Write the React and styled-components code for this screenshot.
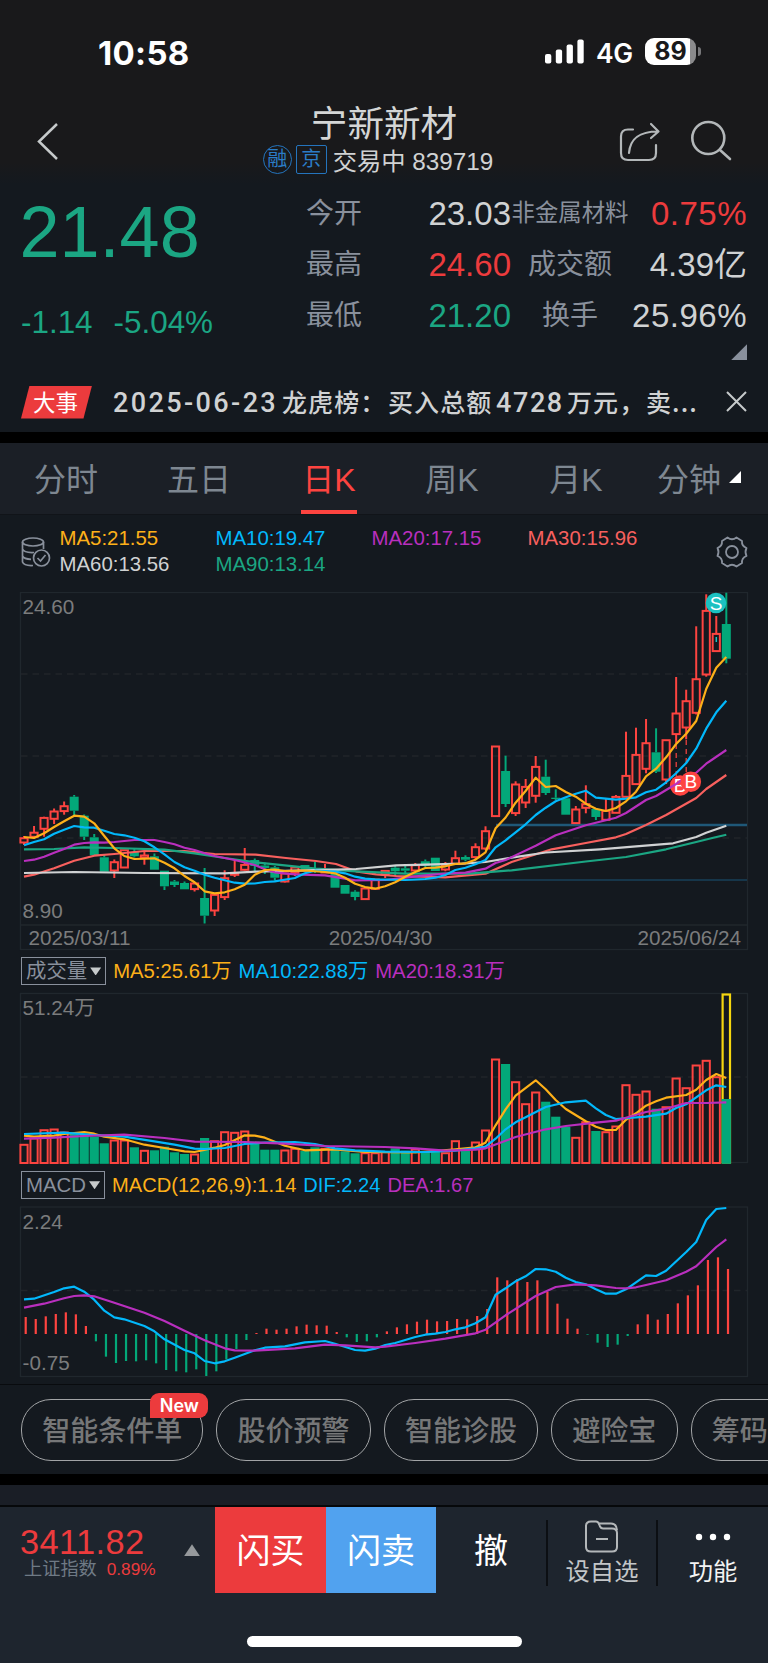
import React from 'react';
import styled, { createGlobalStyle } from 'styled-components';

const RED = '#ec3b3d';
const CANDLE_RED = '#fd4440';
const GREEN = '#1ba683';
const CANDLE_GREEN = '#03a879';
const YELLOW = '#fdb019';
const BLUE = '#02b8fb';
const PURPLE = '#b92fbe';
const PINK = '#f8605e';
const WHITE = '#d0d2d3';

const GlobalStyle = createGlobalStyle`
  * {
    box-sizing: border-box;
  }
  body {
    margin: 0;
    background-color: #14191f;
    font-family: "Liberation Sans", "Noto Sans CJK SC", sans-serif;
  }
`;

const Page = styled.div`
  width: 768px;
  height: 1663px;
  display: flex;
  flex-direction: column;
  overflow: hidden;
  color: ${WHITE};
  background-color: #14191f;
  white-space: nowrap;
`;

const StatusBar = styled.div`
  height: 98px;
  padding: 6px 67px 0 98px;
  display: flex;
  align-items: center;
  justify-content: space-between;
  background-color: #19191b;
  color: white;
  font-family: Inter, sans-serif;
`;

const Clock = styled.div`
  padding-top: 2px;
  font-size: 33px;
  font-weight: 700;
  letter-spacing: 0.3px;
`;

const StatusIcons = styled.div`
  display: flex;
  align-items: center;
`;

const Network = styled.div`
  margin: 2px 12px 0 12px;
  font-size: 26.5px;
  font-weight: 600;
  letter-spacing: -0.2px;
`;

const Battery = styled.div`
  width: 51px;
  height: 27px;
  border-radius: 9px;
  background: linear-gradient(to right, white 45px, #8b8b8d 45px);
  color: #19191b;
  font-size: 25px;
  font-weight: 700;
  line-height: 27px;
  text-align: center;
`;

const BatteryNub = styled.div`
  width: 3px;
  height: 9px;
  margin-left: 2px;
  border-radius: 0 4px 4px 0;
  background-color: #77777a;
`;

const Header = styled.div`
  height: 86px;
  padding: 0 36px 0 34px;
  display: grid;
  grid-template-columns: 160px 1fr 158px;
  background: linear-gradient(#19191b 75%, #14191f);
`;

const HeaderLeft = styled.div`
  padding-top: 24px;
`;

const HeaderRight = styled.div`
  display: flex;
  justify-content: flex-end;
  gap: 28px;
  padding-top: 22px;
`;

const HeaderCenter = styled.div`
  display: flex;
  flex-direction: column;
  align-items: center;
`;

const Title = styled.div`
  height: 46px;
  font-size: 36.6px;
  line-height: 53px;
  color: #d4d6d6;
`;

const Subtitle = styled.div`
  height: 31px;
  margin-left: -12px;
  display: flex;
  align-items: center;
  font-size: 24.3px;
`;

const Badge = styled.div`
  width: ${({ $round }) => ($round ? 29 : 31)}px;
  height: 29px;
  margin-right: ${({ $round }) => ($round ? 4 : 6)}px;
  border: 1.5px solid #2474bd;
  border-radius: ${({ $round }) => ($round ? '50%' : '2px')};
  color: #2b7dc8;
  font-size: 20px;
  line-height: 27px;
  display: flex;
  justify-content: center;
`;

const Quote = styled.div`
  height: 188px;
  padding: 1px 21px 0;
  display: flex;
`;

const PriceColumn = styled.div`
  width: 285px;
  color: ${GREEN};
`;

const Price = styled.div`
  font-size: 72px;
  line-height: 94px;
  margin-left: -1.5px;
`;

const Change = styled.div`
  display: flex;
  gap: 21px;
  font-size: 31.4px;
  line-height: 88px;
`;

const Stats = styled.div`
  padding-top: 3.5px;
`;

const StatsGrid = styled.div`
  display: grid;
  grid-template-columns: 58px 147px 118px 118px;
  grid-auto-rows: 51px;
  line-height: 51px;
`;

const StatLabel = styled.div`
  font-size: ${({ $small }) => ($small ? 23.4 : 28)}px;
  text-align: ${({ $center }) => ($center ? 'center' : 'left')};
  color: #89909c;
`;

const StatValue = styled.div`
  font-size: 33px;
  text-align: right;
  letter-spacing: ${({ $spacing }) => $spacing || 0}px;
  color: ${({ $color }) => $color || WHITE};
`;

const Corner = styled.div`
  width: ${({ $size }) => $size}px;
  height: ${({ $size }) => $size}px;
  background-color: ${({ $color }) => $color};
  clip-path: polygon(100% 0, 100% 100%, 0 100%);
`;

const StatsMore = styled.div`
  display: flex;
  justify-content: flex-end;
  padding-top: 3px;
`;

const News = styled.div`
  height: 61px;
  padding: 0 21px;
  display: flex;
  align-items: center;
`;

const NewsTag = styled.div`
  width: 71px;
  height: 33px;
  margin-right: 21px;
  background-color: ${RED};
  clip-path: polygon(12% 0, 100% 0, 88% 100%, 0 100%);
  color: white;
  font-family: "Noto Sans CJK SC", sans-serif;
  font-size: 22.5px;
  line-height: 31px;
  text-align: center;
  padding-right: 2px;
`;

const NewsText = styled.div`
  flex: 1;
  height: 34px;
  display: flex;
  font-family: "Noto Sans CJK SC", sans-serif;
  font-size: 25px;
  line-height: 32px;
  letter-spacing: 1.1px;
  font-weight: 500;
`;

const NewsNumber = styled.span`
  flex: none;
  width: ${({ $width }) => $width}px;
  font-family: Roboto, sans-serif;
  font-size: 27px;
  font-weight: 500;
  line-height: 36px;
  letter-spacing: ${({ $spacing }) => $spacing}px;
`;

const NewsPart = styled.span`
  flex: none;
  width: ${({ $width }) => $width}px;
`;

const Band = styled.div`
  height: ${({ $height }) => $height}px;
  background-color: black;
`;

const Tabs = styled.div`
  height: 72px;
  padding: 0 27px 0 35px;
  display: grid;
  grid-template-columns: 62px 204px 56px 190px 58px 1fr;
  background-color: #1b1f26;
  border-bottom: 1px solid #111419;
`;

const Tab = styled.div`
  height: 71px;
  display: flex;
  align-items: center;
  justify-content: ${({ $menu }) => ($menu ? 'flex-end' : 'center')};
  gap: 8px;
  color: ${({ $active }) => ($active ? CANDLE_RED : '#7e8791')};
  font-size: 32px;
  line-height: 71px;
  border-bottom: 4px solid ${({ $active }) => ($active ? CANDLE_RED : 'transparent')};
`;

const TabLabel = styled.span`
  padding-top: 7px;
`;

const Averages = styled.div`
  height: 77px;
  padding: 10px 20px 0 21px;
  display: flex;
`;

const AverageGrid = styled.div`
  flex: 1;
  margin-left: 8.5px;
  display: grid;
  grid-template-columns: repeat(4, 156px);
  grid-auto-rows: 26px;
  font-size: 20.4px;
  line-height: 26px;
`;

const Tint = styled.span`
  color: ${({ $color }) => $color};
`;

const IconSlot = styled.div`
  padding-top: 11px;
`;

const Chart = styled.svg`
  display: block;
  flex: none;
`;

const IndicatorRow = styled.div`
  height: 41px;
  padding: 6px 21px 0;
  display: flex;
  gap: 7px;
  font-size: ${({ $size }) => $size}px;
  line-height: 28px;
`;

const Picker = styled.div`
  height: 28px;
  padding: 0 4px;
  display: flex;
  align-items: center;
  gap: 3px;
  border: 1.5px solid #89909c;
  color: #89909c;
  font-size: 20.4px;
  line-height: 26px;
`;

const Arrow = styled.div`
  width: ${({ $width }) => $width}px;
  height: ${({ $height }) => $height}px;
  background-color: ${({ $color }) => $color};
  clip-path: ${({ $up }) => ($up ? 'polygon(50% 0, 100% 100%, 0 100%)' : 'polygon(0 0, 100% 0, 50% 100%)')};
`;

const Shortcuts = styled.div`
  height: 90px;
  padding: 14px 0 0 21px;
  display: flex;
  gap: 13px;
  border-top: 1px solid #090b0e;
`;

const Pill = styled.div`
  position: relative;
  flex: none;
  height: 62px;
  padding: 0 20.2px;
  border: 1.5px solid #a2a4a6;
  border-radius: 30px;
  color: #767778;
  font-family: "Noto Sans CJK SC", sans-serif;
  font-size: 28px;
  font-weight: 500;
  line-height: 58px;
`;

const NewBadge = styled.div`
  position: absolute;
  top: -7px;
  right: -6px;
  width: 58px;
  height: 25px;
  border-radius: 9px 9px 9px 0;
  background-color: ${RED};
  color: white;
  font-family: Inter, sans-serif;
  font-size: 18px;
  font-weight: 600;
  line-height: 26px;
  text-align: center;
`;

const Spacer = styled.div`
  height: 22px;
  background-color: #1a1e26;
  border-bottom: 2px solid #06080a;
`;

const Footer = styled.div`
  height: 156px;
  background-color: #1e252e;
`;

const FooterBar = styled.div`
  height: 86px;
  display: flex;
`;

const IndexBox = styled.div`
  width: 215px;
  padding: 16px 15px 0 21px;
  display: flex;
  justify-content: space-between;
`;

const IndexValue = styled.div`
  height: 33px;
  font-size: 34.4px;
  line-height: 39px;
  letter-spacing: 0.4px;
  color: ${RED};
  margin-left: -1px;
`;

const IndexInfo = styled.div`
  display: flex;
  align-items: center;
  gap: 10px;
  padding-left: 3px;
  height: 26px;
  line-height: 26px;
  font-size: 18.2px;
  color: #6f7a85;
`;

const IndexPercent = styled.span`
  font-size: 17.2px;
  color: ${RED};
`;

const IndexArrow = styled.div`
  padding-top: 21px;
`;

const Trade = styled.div`
  width: ${({ $width }) => $width}px;
  background-color: ${({ $color }) => $color || 'transparent'};
  color: white;
  font-size: 34px;
  line-height: 89px;
  text-align: center;
`;

const Action = styled.div`
  width: ${({ $width }) => $width}px;
  height: 66px;
  margin-top: 13px;
  display: flex;
  flex-direction: column;
  align-items: center;
  border-left: 2px solid #0c0f13;
  color: ${({ $bright }) => ($bright ? '#f2f3f3' : '#c3c6c8')};
  font-size: 24.3px;
  line-height: 37px;
`;

const ActionIcon = styled.div`
  height: 33px;
`;

const HomeIndicator = styled.div`
  width: 275px;
  height: 11px;
  margin: 43px auto 0 247px;
  border-radius: 6px;
  background-color: white;
`;

// body top, body bottom, high, low, 1 = rising
const candles = [
  [838, 842.7, 836, 845, 1], [832.5, 837, 826, 837, 1], [817.7, 829, 816.7, 836.7, 1],
  [811.3, 819, 808.5, 824, 1], [806, 811.3, 801.5, 814.7, 1], [796.7, 810.7, 795, 815, 0],
  [815.7, 836.7, 814.5, 840, 0], [837.3, 855.3, 834, 855.3, 0], [857.3, 871.7, 855, 871.7, 0],
  [862, 870.7, 859.5, 878, 1], [850, 867.7, 850, 867.7, 1], [852, 856.3, 849, 857.5, 0],
  [855.3, 858, 851.5, 864.7, 1], [856.3, 869.7, 853.5, 869.7, 0], [870.7, 886.3, 870.7, 890, 0],
  [881.5, 885, 880, 887, 0], [883, 889.3, 881.5, 889.3, 0], [883.3, 889.3, 882.5, 891.5, 1],
  [898, 915.7, 868, 923.5, 0], [894.7, 910.7, 893, 916, 1], [878, 897.3, 870.3, 900, 1],
  [873.3, 875, 860.5, 877, 1], [864.7, 870, 848, 870.5, 1], [860, 866, 858.5, 871, 0],
  [865.5, 868, 862.7, 874, 0], [867.3, 877.7, 866, 880.7, 0], [873.3, 881.7, 873.3, 882.5, 1],
  [867.3, 873, 867.3, 876, 1], [865, 869.3, 865, 869.3, 0], [869, 872, 862, 873, 0],
  [871.3, 872.7, 864, 873, 1], [874, 887.7, 874, 887.7, 0], [885, 893.7, 885, 893.7, 0],
  [891.7, 897, 890.3, 900.3, 0], [888.3, 899.3, 887, 900, 1], [879.3, 889, 879.3, 889, 1],
  [870.7, 874.7, 870, 878, 1], [867.7, 871.3, 866, 875, 0], [868.3, 870.7, 866, 873.3, 0],
  [865, 870.7, 863, 871.3, 1], [861.3, 866, 859.5, 867, 0], [857.7, 871, 857.7, 871, 0],
  [864.7, 869.7, 862, 871.3, 1], [858, 864, 850.7, 864, 1], [857, 859.7, 855.3, 861.3, 0],
  [847, 857.3, 843.3, 860, 1], [831, 848.7, 826.3, 850, 1], [746.3, 816.3, 746.3, 816.3, 1],
  [771, 804, 755.7, 807, 0], [784.3, 813.3, 781.3, 816, 1], [786.7, 802.7, 779, 808, 1],
  [766.7, 796, 756, 802.7, 1], [776.7, 793, 759.7, 795, 0], [797.7, 799, 789.3, 800, 0],
  [798.3, 814.7, 798.3, 814.7, 0], [809.3, 823.3, 806, 823.3, 1], [804, 808, 785.3, 813.3, 1],
  [809, 817, 809, 820, 0], [810.7, 820, 798.3, 820, 1], [796.7, 813, 795, 813, 1],
  [775.7, 797, 731.7, 797, 1], [754.7, 784.3, 727.7, 784.3, 1], [743, 769, 719, 773.3, 1],
  [752.3, 771.7, 728.3, 773, 0], [740, 779.7, 740, 784, 1], [713.3, 734.3, 677, 743.3, 1],
  [701, 727.7, 689.7, 739.3, 1], [679, 713, 626.3, 714.5, 1], [610.7, 674.7, 594.3, 676.7, 1],
  [633.7, 651.3, 616, 651.3, 1], [624, 658.7, 592.7, 663.3, 0],
];

const volumes = [
  1144.3, 1138, 1129.7, 1129, 1132, 1134, 1133.5, 1136.7, 1143.3, 1140, 1140, 1147.3, 1150.3,
  1150.3, 1146.7, 1152.3, 1154, 1154, 1138, 1140.7, 1131.7, 1132.3, 1131, 1141.7, 1149.7, 1149.7,
  1150, 1148.3, 1151, 1147.3, 1148.3, 1149, 1151.3, 1153.3, 1152.7, 1152.7, 1151.7, 1148.3,
  1150.7, 1149, 1151, 1151.7, 1152.7, 1140.7, 1150.7, 1142, 1130, 1059, 1064, 1081.7, 1103.7,
  1092, 1101.7, 1116.7, 1126.7, 1137.3, 1121.7, 1131, 1131.7, 1126, 1084.7, 1094.3, 1091, 1108.7,
  1106.7, 1078, 1087.7, 1065, 1060.3, 1076.7, 1099,
];

const macd = [
  51, 45, 53, 60, 65, 59, 24, -22, -68, -87, -81, -82, -79, -88, -108, -112, -115, -106, -126,
  -112, -76, -45, -18, 3, 16, 13, 16, 23, 28, 26, 25, 6, -10, -24, -22, -10, 8, 20, 29, 37, 43,
  38, 39, 45, 44, 54, 75, 170, 161, 165, 156, 161, 127, 91, 46, 16, -2, -26, -39, -32, -6, 29, 59,
  43, 60, 92, 116, 146, 222, 230, 195,
];

// flat lists of index, y
const priceLines = [
  [PINK, [0, 876.7, 1, 874.7, 3, 868.3, 5, 860.7, 7, 855.7, 9, 854, 12, 851, 16, 851, 19, 854, 23.1, 854.7, 26.1, 858, 29.1, 861, 31.1, 864, 33.1, 871.3, 35.1, 874.3, 37.1, 876, 42, 877.3, 46, 873.7, 48.6, 862, 52.6, 849.3, 56, 843, 59, 837.3, 60, 834, 62, 825, 64, 815, 67, 798, 68, 789, 70, 775]],
  [GREEN, [0, 849.3, 3, 849, 6, 847.3, 9, 848, 14, 849.7, 17, 853.3, 20, 858, 23.1, 862.3, 29.1, 868.7, 33.1, 871.3, 38, 873.7, 44.4, 873.7, 48.6, 870.3, 56, 861.5, 60, 857, 64, 849.3, 67, 842, 68.7, 837.7, 70, 834.7]],
  [WHITE, [0, 873, 5, 872, 12, 873, 20, 873.3, 23.1, 871.7, 29, 870.2, 33.1, 869, 37.1, 865.3, 43.7, 863.7, 46, 862, 48.6, 857.7, 52, 852.5, 57.4, 849.3, 60.7, 846.7, 64.7, 843.3, 67, 837, 68, 832.7, 70, 825.7]],
  [PURPLE, [0, 861, 1, 859.7, 2, 856.7, 3, 852.7, 4, 849, 5, 844.7, 6, 843, 7, 842.3, 8, 842.7, 9, 842, 10, 841, 11, 840, 13, 840, 14, 842, 15, 844.3, 16, 847.7, 17, 850, 18, 853.3, 19, 856, 21, 860, 23, 865, 24, 869.3, 25, 872.3, 27, 874.3, 30, 875.3, 32, 878.7, 33, 880.3, 36, 880, 38, 877.7, 40, 875.3, 42, 873.7, 44, 872.7, 46, 868.7, 47, 863, 48, 860, 51, 845.7, 53, 835.3, 56, 825.3, 59, 817.7, 60, 813, 62, 800, 63, 796, 65, 784, 66, 777, 67, 772.7, 68, 763.7, 70, 750]],
  [BLUE, [0, 845.3, 1, 842, 2, 839.3, 3, 833.7, 4, 829.7, 5, 826, 6, 827.3, 7, 827.7, 8, 830.7, 9, 834, 10, 835.3, 11, 837.7, 12, 841.3, 13, 847.3, 14, 854.3, 15, 862, 16, 867.3, 17, 870.7, 18, 874.7, 19, 877.7, 20, 880.3, 21, 882.7, 22, 883.7, 23, 883.5, 24, 882, 25, 881.3, 27, 878, 28, 873.3, 29, 870.7, 31, 871.7, 32, 873.3, 33, 876.7, 34, 878.7, 35, 879.3, 38, 880, 40, 879, 41, 877.7, 42, 875, 43, 870, 44, 867.7, 45, 864.3, 46, 860, 47, 847.3, 48, 840.3, 49, 832.3, 50, 824.3, 51, 815, 52, 807.7, 53, 801.3, 54, 797.3, 55, 793.7, 56, 790.7, 57, 797.7, 59, 799.7, 60, 798.7, 61, 797.3, 62, 792.3, 63, 789.7, 64, 782.3, 65, 773.3, 66, 763, 67, 748.7, 68, 728.7, 69, 712.3, 70, 700.7]],
  [YELLOW, [0, 837, 1, 838, 2, 833.3, 3, 827, 4, 821.3, 5, 815.7, 6, 816.7, 7, 823.3, 8, 836, 9, 848.3, 10, 856, 11, 859, 13, 858.3, 14, 862.7, 15, 868.3, 16, 876, 17, 882.3, 18, 891.3, 19, 893.3, 20, 892.3, 21, 889.3, 22, 884.7, 23, 874.7, 24, 870, 25, 869.5, 26, 871, 28, 870.5, 30, 872, 31, 873.3, 32, 877.7, 33, 883.7, 34, 887, 35, 888.7, 36, 886.3, 37, 882.3, 38, 876.7, 39, 872, 40, 868, 41, 867.7, 42, 866.3, 43, 864, 44, 863.3, 45, 859.7, 46, 852.3, 47, 828.3, 48, 817.5, 49, 802.7, 50, 791, 51, 777.7, 52, 787, 53, 786, 54, 792, 55, 796.7, 56, 803.7, 57, 808.7, 58, 811, 59, 808, 60, 801.3, 61, 791.7, 62, 776.3, 63, 768.7, 64, 757.3, 65, 744, 66, 733.7, 67, 721, 68, 689, 69, 667.7, 70, 657]],
];

const volumeLines = [
  [YELLOW, [0, 1135.7, 1, 1136.7, 3, 1135.7, 4, 1134, 6, 1132, 7, 1133.7, 8, 1136.7, 10, 1139.3, 12, 1144.7, 14, 1148, 16, 1151.3, 17, 1152, 19, 1147.7, 20, 1145, 22, 1135.3, 23, 1135.7, 24, 1137.7, 26, 1145.7, 28, 1150.3, 31, 1149.3, 34, 1152, 39, 1152.3, 41, 1151, 43, 1149.3, 45, 1147.3, 46, 1142.7, 47, 1125.3, 48, 1109.3, 49, 1095.7, 51, 1080.3, 52, 1089.3, 53, 1100, 54, 1109, 56, 1121.3, 57, 1126.7, 58, 1130, 59, 1130, 60, 1119.7, 61, 1113.3, 62, 1105.7, 63, 1101.3, 64, 1097.7, 66, 1095, 67, 1089.7, 68, 1080, 69, 1074, 70, 1078]],
  [BLUE, [0, 1134, 4, 1132.7, 7, 1135, 9, 1136, 10, 1136.7, 13, 1141.3, 15, 1144.7, 17, 1148.7, 18, 1149, 20, 1148, 22, 1144, 24, 1142.7, 27, 1142, 29, 1144, 31, 1148.3, 33, 1150.3, 36, 1151.7, 40, 1152, 43, 1150.7, 45, 1148.3, 46, 1146.7, 47, 1138.7, 48, 1129.3, 49, 1122.3, 50, 1117.3, 52, 1107, 54, 1102.3, 56, 1100.7, 57, 1108.3, 58, 1115, 59, 1119, 62, 1116.7, 64, 1113.7, 65, 1108, 66, 1104.3, 67, 1097.3, 68, 1090.3, 69, 1085.3, 70, 1087]],
  [PURPLE, [0, 1138.7, 3, 1137.7, 6, 1136, 10, 1134.7, 14, 1138, 17, 1141.7, 22, 1142, 26, 1143.7, 30, 1146, 36, 1147, 39, 1148.3, 42, 1150.7, 45, 1149.7, 46, 1148.3, 48, 1140.7, 49, 1137, 52, 1129.3, 54, 1126, 57, 1122.7, 59, 1120.7, 60, 1117.7, 62, 1112, 64, 1108.7, 66, 1103, 68, 1103, 70, 1102.3]],
];

const macdLines = [
  [BLUE, [0, 1299.3, 1, 1298.7, 3, 1292, 4, 1288.3, 5, 1286.7, 6, 1291.7, 7, 1299.7, 8, 1310.7, 9, 1317.3, 10, 1319.3, 12, 1326, 13, 1331.3, 14, 1339.3, 16, 1350, 17, 1353.3, 18, 1361, 19, 1363.3, 20, 1361.3, 21, 1357.7, 23, 1350.3, 24, 1347.7, 26, 1346.3, 28, 1342.3, 30, 1341, 31, 1343.7, 33, 1350, 34, 1350.7, 35, 1348.7, 36, 1345, 37, 1343, 39, 1337, 40, 1334.7, 41, 1333.7, 42, 1332, 43, 1329.3, 44, 1327.3, 45, 1323.3, 46, 1317.3, 47, 1294.7, 48, 1288.3, 49, 1281.3, 50, 1276.3, 51, 1269, 52, 1269.3, 53, 1271.7, 54, 1277.7, 55, 1282, 56, 1284.3, 57, 1289.3, 58, 1293.7, 59, 1293.7, 60, 1289.3, 62, 1275.3, 63, 1276, 64, 1270.7, 66, 1252, 67, 1242, 68, 1220, 69, 1209, 70, 1208]],
  [PURPLE, [0, 1307.7, 2, 1303.7, 4, 1298.3, 5, 1296, 6, 1295.3, 7, 1296.3, 9, 1302.7, 12, 1312.7, 14, 1321, 16, 1330.7, 18, 1340.3, 20, 1348.3, 21, 1350.3, 23, 1350.7, 27, 1348.3, 30, 1344.7, 32, 1345.3, 35, 1347.3, 36, 1346.7, 39, 1343, 42, 1338.7, 45, 1333.3, 46, 1329.7, 48, 1315.3, 51, 1296, 53, 1287, 55, 1284.3, 57, 1285.3, 59, 1288, 60, 1288.3, 61, 1287.3, 62, 1285, 64, 1280.3, 66, 1271.7, 67, 1266.3, 69, 1247, 70, 1239.3]],
];

const xAt = (index) => 24 + index * 10.033;

const toPoints = (list) => {
  const points = [];
  for (let i = 0; i < list.length; i += 2) {
    points.push(`${xAt(list[i]).toFixed(1)},${list[i + 1]}`);
  }
  return points.join(' ');
};

function Lines({ lines }) {
  return lines.map(([color, list]) => (
    <polyline
      key={color}
      points={toPoints(list)}
      fill="none"
      stroke={color}
      strokeWidth="2.2"
      strokeLinejoin="round"
    />
  ));
}

function Frame({ top, bottom, dashes }) {
  return (
    <>
      <rect x="20.5" y={top + 0.5} width="727" height={bottom - top} fill="none" stroke="#20272d" strokeWidth="1.3" />
      {dashes.map((y) => (
        <line key={y} x1="21" x2="747" y1={y} y2={y} stroke="#20252a" strokeWidth="1.5" strokeDasharray="6.5 5" />
      ))}
    </>
  );
}

function AxisText({ x, y, anchor, children }) {
  return (
    <text x={x} y={y} textAnchor={anchor || 'start'} fill="#7b7c7d" fontSize="20.7">
      {children}
    </text>
  );
}

function Marker({ x, y, color, letter }) {
  return (
    <g>
      <circle cx={x} cy={y} r="10.3" fill={color} />
      <text x={x} y={y + 6.7} textAnchor="middle" fill="white" fontSize="19">{letter}</text>
    </g>
  );
}

function PriceChart() {
  return (
    <Chart width="768" height="359" viewBox="0 592 768 359">
      <Frame top={592} bottom={949} dashes={[674, 756, 838]} />
      <line x1="21" x2="747" y1="925" y2="925" stroke="#20272d" strokeWidth="1.5" />
      <line x1="496" x2="747" y1="825" y2="825" stroke="#1f5878" strokeWidth="2.5" />
      <line x1="395" x2="747" y1="880" y2="880" stroke="#17405a" strokeWidth="1.5" />
      {candles.map(([top, bottom, high, low, up], i) => {
        const x = xAt(i);
        const color = up ? CANDLE_RED : CANDLE_GREEN;
        return (
          <g key={x} stroke={color}>
            <line x1={x} x2={x} y1={high} y2={top} strokeWidth="2" />
            <line x1={x} x2={x} y1={bottom} y2={low} strokeWidth="2" />
            {up ? (
              <rect x={x - 3.6} y={top + 0.2} width="7.2" height={Math.max(bottom - top - 0.4, 1)} fill="none" strokeWidth="2" />
            ) : (
              <rect x={x - 4.5} y={top} width="9" height={bottom - top} fill={color} stroke="none" />
            )}
          </g>
        );
      })}
      <path d="M676.2 744V776M686.2 740V774" stroke={CANDLE_RED} strokeWidth="1.2" strokeDasharray="5 4" />
      <path d="M716.3 637v5" stroke="#1bc5c5" strokeWidth="1.5" />
      <Marker x={680.2} y={785.5} color={CANDLE_RED} letter="B" />
      <Lines lines={priceLines} />
      <Marker x={690.8} y={781.7} color={CANDLE_RED} letter="B" />
      <Marker x={716} y={603} color="#1bc1c1" letter="S" />
      <AxisText x={22.5} y={614}>24.60</AxisText>
      <AxisText x={22.5} y={918}>8.90</AxisText>
      <AxisText x={28.5} y={945}>2025/03/11</AxisText>
      <AxisText x={380.5} y={945} anchor="middle">2025/04/30</AxisText>
      <AxisText x={741} y={945} anchor="end">2025/06/24</AxisText>
    </Chart>
  );
}

function VolumeChart() {
  return (
    <Chart width="768" height="173" viewBox="0 992 768 173">
      <Frame top={993} bottom={1162} dashes={[1077]} />
      <rect x={xAt(70) - 3.7} y="994.5" width="7.4" height="168" fill="none" stroke="#f5d60f" strokeWidth="2.2" />
      {volumes.map((top, i) => (candles[i][4] ? (
        <rect key={xAt(i)} x={xAt(i) - 3.6} y={top + 0.5} width="7.2" height={1162.5 - top} fill="none" stroke={CANDLE_RED} strokeWidth="2" />
      ) : (
        <rect key={xAt(i)} x={xAt(i) - 4.6} y={top} width="9.2" height={1163.8 - top} fill={CANDLE_GREEN} />
      )))}
      <Lines lines={volumeLines} />
      <AxisText x={22.5} y={1015}>51.24万</AxisText>
    </Chart>
  );
}

function MacdChart() {
  return (
    <Chart width="768" height="178" viewBox="0 1206 768 178">
      <Frame top={1206.5} bottom={1376} dashes={[1290.5]} />
      {macd.map((value, i) => (
        <line
          key={xAt(i)}
          x1={xAt(i) + 1.7}
          x2={xAt(i) + 1.7}
          y1="1334"
          y2={1334 - value / 3}
          stroke={value > 0 ? CANDLE_RED : CANDLE_GREEN}
          strokeWidth="2.2"
        />
      ))}
      <Lines lines={macdLines} />
      <AxisText x={22.5} y={1229}>2.24</AxisText>
      <AxisText x={22.5} y={1370}>-0.75</AxisText>
    </Chart>
  );
}

const tabs = ['分时', '五日', '日K', '周K', '月K', '分钟'];
const averages = [
  ['MA5:21.55', YELLOW],
  ['MA10:19.47', BLUE],
  ['MA20:17.15', PURPLE],
  ['MA30:15.96', PINK],
  ['MA60:13.56', WHITE],
  ['MA90:13.14', GREEN],
];
const shortcuts = ['智能条件单', '股价预警', '智能诊股', '避险宝', '筹码分布'];

function TopBar() {
  return (
    <>
      <StatusBar>
        <Clock>10:58</Clock>
        <StatusIcons>
          <svg width="39" height="25" viewBox="0 0 39 25" fill="white">
            <rect x="0" y="15" width="6.3" height="9.5" rx="2" />
            <rect x="10.8" y="10.5" width="6.3" height="14" rx="2" />
            <rect x="21.6" y="5.5" width="6.3" height="19" rx="2" />
            <rect x="32.4" y="0.5" width="6.3" height="24" rx="2" />
          </svg>
          <Network>4G</Network>
          <Battery>89</Battery>
          <BatteryNub />
        </StatusIcons>
      </StatusBar>
      <Header>
        <HeaderLeft>
          <svg width="26" height="40" viewBox="0 0 26 40" fill="none" stroke="#c6cacb" strokeWidth="2.5">
            <path d="M23 2L5 19.500L23 37" />
          </svg>
        </HeaderLeft>
        <HeaderCenter>
          <Title>宁新新材</Title>
          <Subtitle>
            <Badge $round>融</Badge>
            <Badge>京</Badge>
            交易中 839719
          </Subtitle>
        </HeaderCenter>
        <HeaderRight>
          <svg width="42" height="44" viewBox="0 0 42 44" fill="none" stroke="#b3b7b9" strokeWidth="2.2" strokeLinecap="round" strokeLinejoin="round">
            <path d="M14 9.500H9Q2 9.500 2 16.500V33Q2 40 9 40H30Q37 40 37 33V25" />
            <path d="M10 33C11 20 18 11.500 39 11.500M32 4L39.500 11.500L32 18" />
          </svg>
          <svg width="43" height="44" viewBox="0 0 43 44" fill="none" stroke="#b3b7b9" strokeWidth="2.600" strokeLinecap="round">
            <circle cx="19.300" cy="18" r="16" />
            <path d="M31 30L41 39" />
          </svg>
        </HeaderRight>
      </Header>
    </>
  );
}

function QuotePanel() {
  return (
    <>
      <Quote>
        <PriceColumn>
          <Price>21.48</Price>
          <Change>
            <span>-1.14</span>
            <span>-5.04%</span>
          </Change>
        </PriceColumn>
        <Stats>
          <StatsGrid>
            <StatLabel>今开</StatLabel>
            <StatValue>23.03</StatValue>
            <StatLabel $center $small>非金属材料</StatLabel>
            <StatValue $color={RED} $spacing={0.5}>0.75%</StatValue>
            <StatLabel>最高</StatLabel>
            <StatValue $color={RED}>24.60</StatValue>
            <StatLabel $center>成交额</StatLabel>
            <StatValue>4.39亿</StatValue>
            <StatLabel>最低</StatLabel>
            <StatValue $color={GREEN}>21.20</StatValue>
            <StatLabel $center>换手</StatLabel>
            <StatValue $spacing={0.5}>25.96%</StatValue>
          </StatsGrid>
          <StatsMore>
            <Corner $size={16} $color="#89909c" />
          </StatsMore>
        </Stats>
      </Quote>
      <News>
        <NewsTag>大事</NewsTag>
        <NewsText>
          <NewsNumber $width={169} $spacing={2.4}>2025-06-23</NewsNumber>
          <NewsPart $width={106}>龙虎榜：</NewsPart>
          <NewsPart $width={108}>买入总额</NewsPart>
          <NewsNumber $width={71} $spacing={1.6}>4728</NewsNumber>
          <NewsPart $width={79}>万元，</NewsPart>
          <NewsPart $width={52}>卖...</NewsPart>
        </NewsText>
        <svg width="28" height="24" viewBox="0 0 28 24" stroke="#c6cacb" strokeWidth="2">
          <path d="M8 2L27 21M27 2L8 21" />
        </svg>
      </News>
    </>
  );
}

export default function App() {
  return (
    <Page>
      <GlobalStyle />
      <TopBar />
      <QuotePanel />
      <Band $height={11} />
      <Tabs>
        {tabs.map((name) => (
          <Tab key={name} $active={name === '日K'} $menu={name === '分钟'}>
            <TabLabel>{name}</TabLabel>
            {name === '分钟' && <Corner $size={12} $color="white" />}
          </Tab>
        ))}
      </Tabs>
      <Averages>
        <IconSlot>
          <svg width="30" height="32" viewBox="0 0 30 32" fill="none" stroke="#89909c" strokeWidth="1.7">
            <ellipse cx="12" cy="6" rx="10.500" ry="4" />
            <path d="M1.500 6V26Q3 30 12 29.500M22.500 6V13M1.500 13Q3 17 13 16.500M1.500 20Q3 23 10 23.300" />
            <circle cx="20.500" cy="22" r="8" />
            <path d="M16.500 22L19.500 25L24.500 19" />
          </svg>
        </IconSlot>
        <AverageGrid>
          {averages.map(([label, color]) => (
            <Tint key={label} $color={color}>{label}</Tint>
          ))}
        </AverageGrid>
        <IconSlot>
          <svg width="32" height="32" viewBox="0 0 32 32" fill="none" stroke="#89909c" strokeWidth="1.800" strokeLinejoin="round">
            <path d="M11.500 1.500Q16 5 20.500 1.500L26 5Q25.500 10 30.500 12Q28.500 16 30.500 20Q25.500 22 26 27L20.500 30.500Q16 27 11.500 30.500L6 27Q6.500 22 1.500 20Q3.500 16 1.500 12Q6.500 10 6 5Z" />
            <circle cx="16" cy="16" r="6" />
          </svg>
        </IconSlot>
      </Averages>
      <PriceChart />
      <IndicatorRow $size={20.3}>
        <Picker>
          成交量
          <Arrow $width={11} $height={8} $color="#c6cacb" />
        </Picker>
        <Tint $color={YELLOW}>MA5:25.61万</Tint>
        <Tint $color={BLUE}>MA10:22.88万</Tint>
        <Tint $color={PURPLE}>MA20:18.31万</Tint>
      </IndicatorRow>
      <VolumeChart />
      <IndicatorRow $size={20.1}>
        <Picker>
          MACD
          <Arrow $width={11} $height={8} $color="#c6cacb" />
        </Picker>
        <Tint $color={YELLOW}>MACD(12,26,9):1.14</Tint>
        <Tint $color={BLUE}>DIF:2.24</Tint>
        <Tint $color={PURPLE}>DEA:1.67</Tint>
      </IndicatorRow>
      <MacdChart />
      <Shortcuts>
        {shortcuts.map((name, i) => (
          <Pill key={name}>
            {name}
            {i === 0 && <NewBadge>New</NewBadge>}
          </Pill>
        ))}
      </Shortcuts>
      <Band $height={11} />
      <Spacer />
      <Footer>
        <FooterBar>
          <IndexBox>
            <div>
              <IndexValue>3411.82</IndexValue>
              <IndexInfo>
                上证指数
                <IndexPercent>0.89%</IndexPercent>
              </IndexInfo>
            </div>
            <IndexArrow>
              <Arrow $up $width={16} $height={12} $color="#96999c" />
            </IndexArrow>
          </IndexBox>
          <Trade $width={111} $color={RED}>闪买</Trade>
          <Trade $width={110} $color="#51a2ef">闪卖</Trade>
          <Trade $width={110}>撤</Trade>
          <Action $width={110}>
            <ActionIcon>
              <svg width="36" height="33" viewBox="0 0 36 33" fill="none" stroke="#b3b7b9" strokeWidth="2" strokeLinejoin="round">
                <path d="M7 1.500H12Q14 1.500 15 4L16 6.500Q17 8.500 19 8.500H28Q33 8.500 33 13V27Q33 31.500 28 31.500H7Q2 31.500 2 27V6Q2 1.500 7 1.500Z" />
                <path d="M14 3.500H27Q32.500 3.500 33 10M12 19H24" />
              </svg>
            </ActionIcon>
            设自选
          </Action>
          <Action $width={112} $bright>
            <ActionIcon>
              <svg width="36" height="33" viewBox="0 0 36 33" fill="white">
                <circle cx="4" cy="17" r="3.200" />
                <circle cx="18" cy="17" r="3.200" />
                <circle cx="32" cy="17" r="3.200" />
              </svg>
            </ActionIcon>
            功能
          </Action>
        </FooterBar>
        <HomeIndicator />
      </Footer>
    </Page>
  );
}
